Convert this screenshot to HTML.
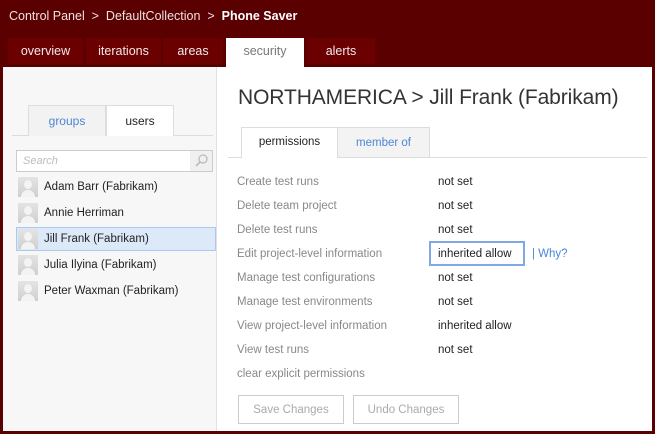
<!DOCTYPE html>
<html><head><style>
*{margin:0;padding:0;box-sizing:border-box}
body{width:655px;height:434px;background:#5a0000;font-family:"Liberation Sans",sans-serif;font-size:12px;position:relative;overflow:hidden}
.a{position:absolute;white-space:nowrap}
.bc{top:9px;left:9px;color:#f0e0e0;font-size:12.5px}
.tab{position:absolute;top:38px;height:26px;background:#6b0000;color:#f4e8e8;font-size:12.5px;text-align:center;line-height:27px}
.main{position:absolute;left:3px;top:67px;width:649px;height:364px;background:#fff}
.left{position:absolute;left:3px;top:67px;width:214px;height:364px;background:#f7f7f7;border-right:1px solid #e2e2e2}
.row{position:absolute;left:16px;width:200px;height:24px;line-height:25px;color:#222;font-size:11.5px}
.av{position:absolute;left:2px;top:2px;width:20px;height:20px;background:linear-gradient(#e4e4e4,#cfcfcf)}
.av:before{content:"";position:absolute;left:6px;top:3px;width:8px;height:9px;border-radius:50%;background:#f3f3f3}
.av:after{content:"";position:absolute;left:3px;top:13px;width:14px;height:7px;border-radius:7px 7px 0 0;background:#f3f3f3}
.row span{position:absolute;left:28px}
.lab{position:absolute;left:237px;color:#888;font-size:11.5px}
.val{position:absolute;left:438px;color:#222;font-size:11.5px}
.btn{position:absolute;top:395px;height:29px;border:1px solid #ccc;color:#aaa;text-align:center;line-height:29px;font-size:11.5px;background:#fff}
</style></head><body>
<div class="a bc">Control Panel &nbsp;&gt;&nbsp; DefaultCollection &nbsp;&gt;&nbsp; <b style="color:#fff">Phone Saver</b></div>
<div class="tab" style="left:8px;width:75px">overview</div>
<div class="tab" style="left:86px;width:75px">iterations</div>
<div class="tab" style="left:163px;width:60px">areas</div>
<div class="tab" style="left:226px;width:78px;height:30px;background:#fff;color:#777">security</div>
<div class="tab" style="left:307px;width:68px">alerts</div>
<div class="main"></div>
<div class="left"></div>
<div class="a" style="left:12px;top:135px;width:201px;height:1px;background:#ddd"></div>
<div class="a" style="left:28px;top:105px;width:78px;height:31px;background:#f2f2f2;border:1px solid #ddd;border-bottom:none;color:#4a86d8;text-align:center;line-height:31px">groups</div>
<div class="a" style="left:106px;top:105px;width:68px;height:31px;background:#fff;border:1px solid #ddd;border-bottom:none;color:#222;text-align:center;line-height:31px">users</div>
<div class="a" style="left:16px;top:150px;width:197px;height:22px;background:#fff;border:1px solid #ccc;color:#bbb;font-style:italic;font-size:11px;line-height:20px;padding-left:6px">Search
<div style="position:absolute;right:0;top:0;width:22px;height:20px;background:#f0f0f0"><svg width="22" height="20"><circle cx="13" cy="8" r="4" fill="none" stroke="#bbb" stroke-width="1.3"/><line x1="10" y1="11" x2="6" y2="15" stroke="#bbb" stroke-width="1.6"/></svg></div></div>
<div class="row" style="top:175px"><div class="av"></div><span>Adam Barr (Fabrikam)</span></div>
<div class="row" style="top:201px"><div class="av"></div><span>Annie Herriman</span></div>
<div class="row" style="top:227px;background:#dce9f8;border:1px solid #a9c9ee"><div class="av" style="left:1px;top:1px"></div><span style="left:27px;line-height:23px">Jill Frank (Fabrikam)</span></div>
<div class="row" style="top:253px"><div class="av"></div><span>Julia Ilyina (Fabrikam)</span></div>
<div class="row" style="top:279px"><div class="av"></div><span>Peter Waxman (Fabrikam)</span></div>
<div class="a" style="left:238px;top:86px;font-size:21px;color:#333;letter-spacing:-0.1px">NORTHAMERICA &gt; Jill Frank (Fabrikam)</div>
<div class="a" style="left:228px;top:157px;width:419px;height:1px;background:#ddd"></div>
<div class="a" style="left:241px;top:127px;width:97px;height:31px;background:#fff;border:1px solid #ddd;border-bottom:none;text-align:center;line-height:29px;color:#222;font-size:11.5px">permissions</div>
<div class="a" style="left:337px;top:127px;width:93px;height:30px;background:#f3f3f3;border:1px solid #ddd;border-bottom:none;text-align:center;line-height:31px;color:#4a86d8;font-size:11.5px">member of</div>
<div class="lab" style="top:176px">Create test runs</div><div class="val" style="top:176px">not set</div>
<div class="lab" style="top:200px">Delete team project</div><div class="val" style="top:200px">not set</div>
<div class="lab" style="top:224px">Delete test runs</div><div class="val" style="top:224px">not set</div>
<div class="lab" style="top:248px">Edit project-level information</div>
<div class="a" style="left:429px;top:241px;width:96px;height:25px;border:2px solid #7ea9e6"></div>
<div class="val" style="top:248px">inherited allow</div>
<div class="a" style="left:532px;top:248px;color:#4a86d8;font-size:11.5px">| Why?</div>
<div class="lab" style="top:272px">Manage test configurations</div><div class="val" style="top:272px">not set</div>
<div class="lab" style="top:296px">Manage test environments</div><div class="val" style="top:296px">not set</div>
<div class="lab" style="top:320px">View project-level information</div><div class="val" style="top:320px">inherited allow</div>
<div class="lab" style="top:344px">View test runs</div><div class="val" style="top:344px">not set</div>
<div class="lab" style="top:368px">clear explicit permissions</div>
<div class="btn" style="left:238px;width:106px">Save Changes</div>
<div class="btn" style="left:353px;width:106px">Undo Changes</div>
</body></html>
